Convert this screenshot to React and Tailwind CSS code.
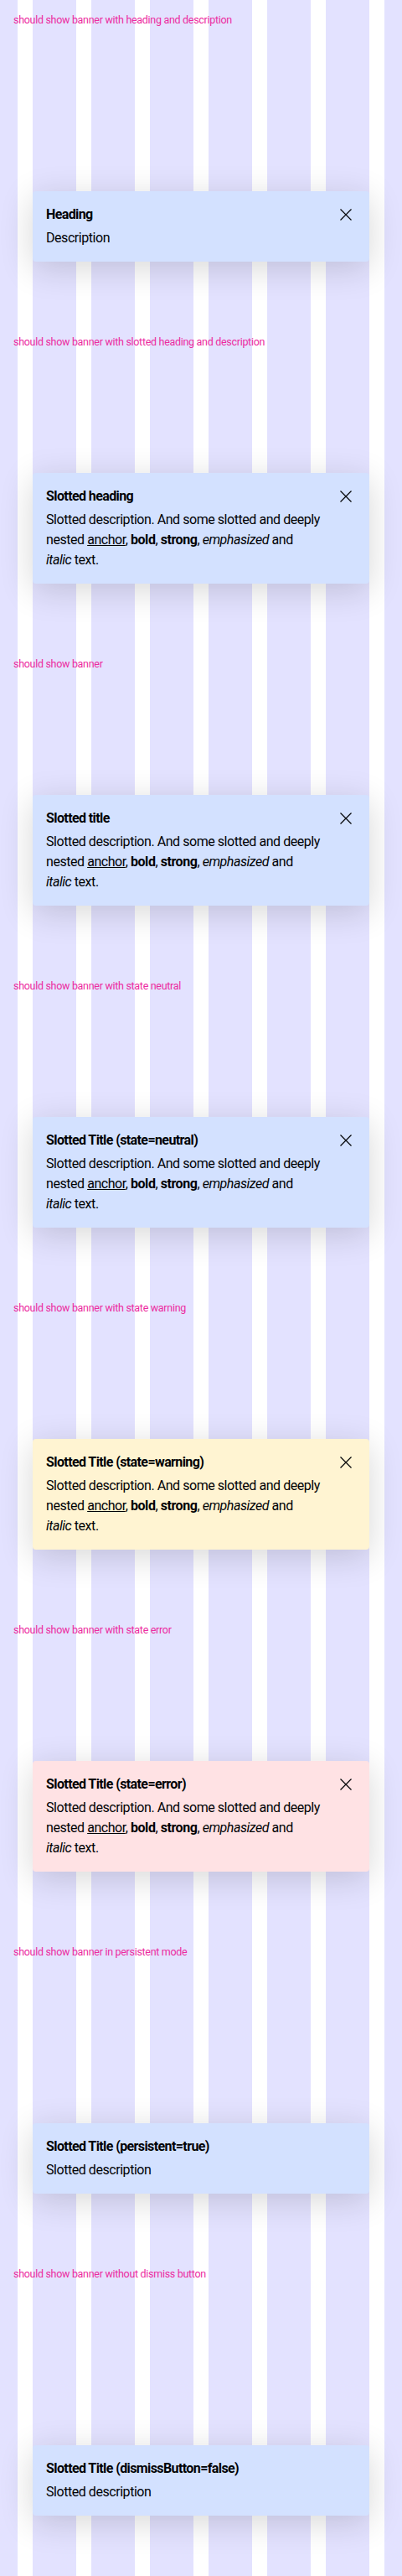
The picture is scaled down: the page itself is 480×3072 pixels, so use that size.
import { Fragment } from "react";

const font = { fontFamily: "Roboto, 'Liberation Sans', sans-serif" };

const tones = {
  info: "bg-[#d3e1ff]",
  warning: "bg-[#fff4d2]",
  error: "bg-[#ffe2e4]",
};

function CloseIcon() {
  return (
    <svg width="14" height="14" viewBox="0 0 14 14" fill="none">
      <path d="M0.5 0.5 L13.5 13.5 M13.5 0.5 L0.5 13.5" stroke="#010205" strokeWidth="1.2" />
    </svg>
  );
}

function RichDescription() {
  return (
    <>
      Slotted description. And some slotted and deeply
      <br />
      nested <a className="underline">anchor</a>, <b>bold</b>,{" "}
      <strong>strong</strong>, <em>emphasized</em> and
      <br />
      <i>italic</i> text.
    </>
  );
}

function Banner({ heading, children, tone = "info", dismiss = true }) {
  return (
    <div
      className={`mx-[39px] mb-[72px] mt-auto flex gap-2 rounded-[4px] p-4 shadow-[0_8px_40px_rgba(0,0,0,0.16)] ${tones[tone]}`}
    >
      <div className="min-w-0 flex-1 whitespace-nowrap text-[16px] leading-6 text-[#010205]">
        <div className="font-bold tracking-[-0.6px]">{heading}</div>
        <div className="mt-1 tracking-[-0.45px]">{children}</div>
      </div>
      {dismiss && (
        <button className="flex h-6 w-6 shrink-0 items-center justify-center">
          <CloseIcon />
        </button>
      )}
    </div>
  );
}

const cases = [
  {
    label: "should show banner with heading and description",
    heading: "Heading",
    body: "Description",
  },
  {
    label: "should show banner with slotted heading and description",
    heading: "Slotted heading",
    rich: true,
  },
  { label: "should show banner", heading: "Slotted title", rich: true },
  {
    label: "should show banner with state neutral",
    heading: "Slotted Title (state=neutral)",
    rich: true,
  },
  {
    label: "should show banner with state warning",
    heading: "Slotted Title (state=warning)",
    rich: true,
    tone: "warning",
  },
  {
    label: "should show banner with state error",
    heading: "Slotted Title (state=error)",
    rich: true,
    tone: "error",
  },
  {
    label: "should show banner in persistent mode",
    heading: "Slotted Title (persistent=true)",
    body: "Slotted description",
    dismiss: false,
  },
  {
    label: "should show banner without dismiss button",
    heading: "Slotted Title (dismissButton=false)",
    body: "Slotted description",
    dismiss: false,
  },
];

export default function App() {
  return (
    <div
      style={font}
      className="w-[480px] bg-[repeating-linear-gradient(90deg,#ffffff_0px,#ffffff_18px,#e3e2ff_18px,#e3e2ff_70px)] bg-[position:21px_0]"
    >
      {cases.map((c) => (
        <section key={c.label} className="flex h-[384px] flex-col">
          <p className="px-4 pt-4 text-[12.5px] leading-4 tracking-[-0.3px] text-[#ec2ba0]">
            {c.label}
          </p>
          <Banner heading={c.heading} tone={c.tone} dismiss={c.dismiss !== false}>
            {c.rich ? <RichDescription /> : <Fragment>{c.body}</Fragment>}
          </Banner>
        </section>
      ))}
    </div>
  );
}
